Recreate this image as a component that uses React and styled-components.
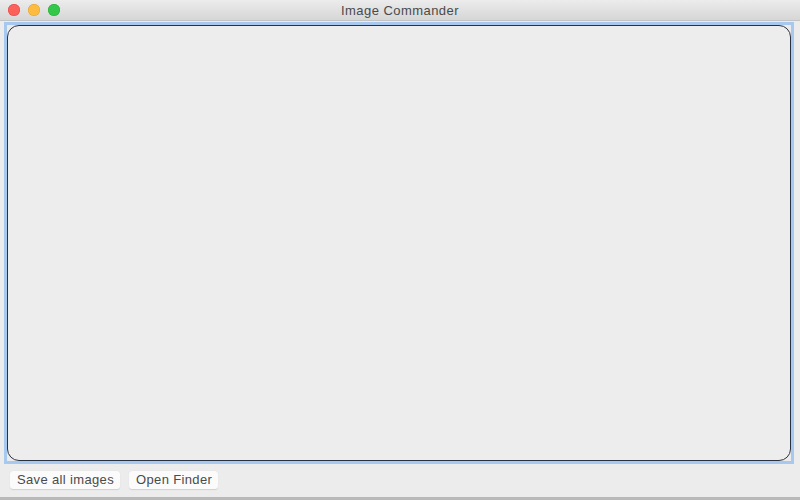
import React from "react";
import styled, { createGlobalStyle } from "styled-components";

const Global = createGlobalStyle`
  html, body { margin: 0; padding: 0; width: 800px; height: 500px; overflow: hidden; }
  body { font-family: "Liberation Sans", Arial, sans-serif; background: #ececec; }
`;

const Window = styled.div`
  width: 800px;
  height: 500px;
  display: flex;
  flex-direction: column;
  background: #ececec;
  box-sizing: border-box;
  border-bottom: 3px solid #b9b9b9;
`;

const TitleBar = styled.div`
  position: relative;
  height: 20px;
  flex: none;
  display: flex;
  align-items: center;
  justify-content: center;
  background: linear-gradient(#ececec, #d6d6d6);
  border-bottom: 1px solid #c4c4c4;
`;

const Lights = styled.div`
  position: absolute;
  left: 8px;
  top: 4px;
  display: flex;
  gap: 8px;
`;

const Light = styled.span`
  width: 12px;
  height: 12px;
  border-radius: 50%;
  background: ${(p) => p.$color};
  box-shadow: inset 0 0 0 0.5px ${(p) => p.$edge};
`;

const Title = styled.div`
  font-size: 13px;
  letter-spacing: 0.45px;
  color: #4a4a4a;
`;

const Body = styled.div`
  flex: 1;
  display: flex;
  flex-direction: column;
  padding: 1px 6px 0 4px;
`;

const Focus = styled.div`
  flex: none;
  height: 442px;
  box-sizing: border-box;
  border: 3px solid #a8c9ef;
  display: flex;
`;

const Well = styled.div`
  flex: 1;
  box-sizing: border-box;
  border: 1.5px solid #2a3140;
  border-radius: 12px;
  background: #ededed;
`;

const Buttons = styled.div`
  display: flex;
  gap: 9px;
  padding: 7px 0 0 6px;
`;

const Button = styled.button`
  height: 18px;
  padding: 0 6px 0 7px;
  border: none;
  border-radius: 3px;
  background: #fbfbfb;
  box-shadow: 0 0.5px 1px rgba(0, 0, 0, 0.12);
  font-family: "Liberation Sans", Arial, sans-serif;
  font-size: 13px;
  letter-spacing: 0.35px;
  color: #4a4a4a;
  line-height: 18px;
`;

export default function App() {
  return (
    <Window>
      <Global />
      <TitleBar>
        <Lights>
          <Light $color="#fc605b" $edge="#de4842" />
          <Light $color="#fdbc40" $edge="#dea034" />
          <Light $color="#34c84a" $edge="#27aa35" />
        </Lights>
        <Title>Image Commander</Title>
      </TitleBar>
      <Body>
        <Focus>
          <Well />
        </Focus>
        <Buttons>
          <Button>Save all images</Button>
          <Button>Open Finder</Button>
        </Buttons>
      </Body>
    </Window>
  );
}
